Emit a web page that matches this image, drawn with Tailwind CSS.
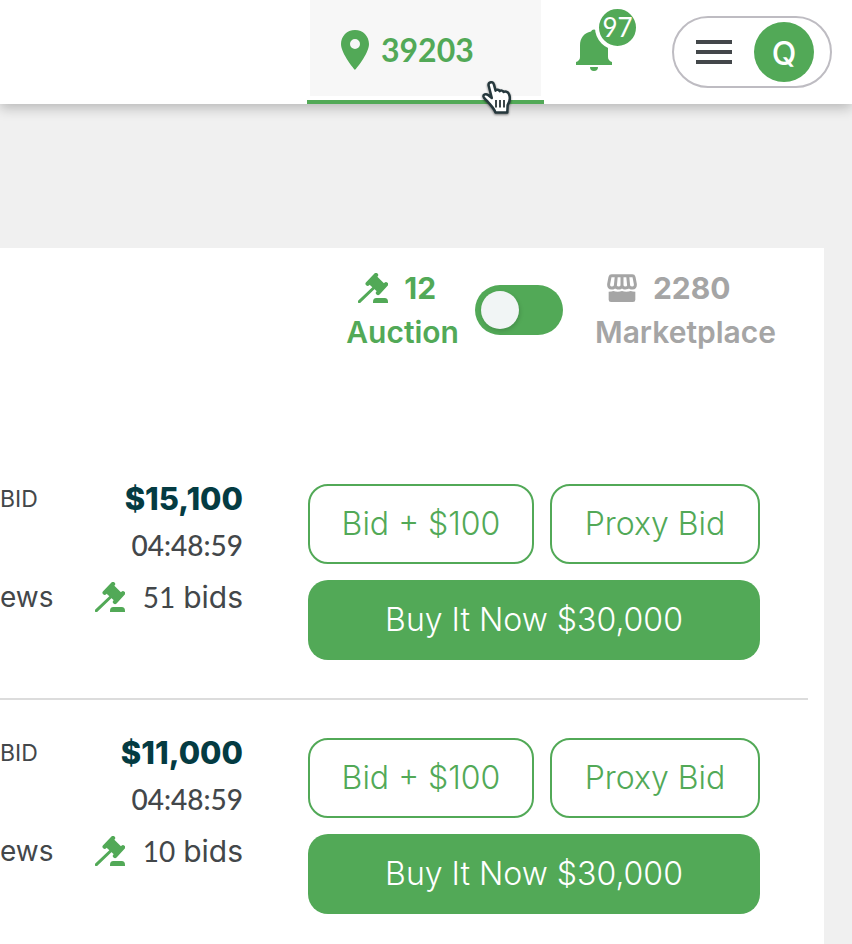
<!DOCTYPE html>
<html lang="en">
<head>
<meta charset="utf-8">
<meta name="viewport" content="width=device-width, initial-scale=1">
<title>Auctions</title>
<script src="https://cdn.jsdelivr.net/npm/@tailwindcss/browser@4"></script>
</head>
<body class="min-h-screen overflow-x-hidden bg-[#f0f0f0] font-[Inter,sans-serif] text-[#43474a]">
<svg class="hidden" aria-hidden="true">
  <symbol id="gavel" viewBox="0 0 90 90">
    <g fill="none" stroke="currentColor" stroke-linecap="round" stroke-linejoin="round">
      <path d="M4 86 50 42" stroke-width="9"/>
      <path d="M29 32 54 6" stroke-width="13"/>
      <path d="M60 60 84 34" stroke-width="13"/>
      <path d="M36 32 56 13 78 35 60 54Z" fill="currentColor" stroke-width="6"/>
    </g>
    <path d="M45 90v-3q0-12 10-12h25q10 0 10 12v3Z" fill="currentColor"/>
  </symbol>
</svg>

<header class="flex h-26 justify-end bg-white pr-5 shadow-[0_4px_12px_rgba(0,0,0,0.24)]">
  <button type="button" class="relative mr-8 flex w-[237px] cursor-pointer flex-col border-b-4 border-[#52a957] px-[3px] text-[#52a957]">
    <span class="flex h-24 w-full items-center gap-3 bg-[#f7f7f7] pt-1 pl-[31px] font-[Lato,sans-serif] text-[32px] leading-10 font-bold">
      <svg class="h-10 w-7" viewBox="0 0 28 40" aria-hidden="true"><path fill="currentColor" fill-rule="evenodd" d="M14 0C6 0 0 6.200 0 14c0 10 14 26 14 26s14-16 14-26C28 6.200 22 0 14 0Zm0 9a5 5 0 1 1 0 10 5 5 0 0 1 0-10Z"/></svg>
      39203
    </span>
    <svg class="absolute top-[81px] left-[174px] h-9 w-8 drop-shadow-[0_1px_1px_rgba(0,0,0,0.5)]" viewBox="0 0 32 36" aria-hidden="true">
      <path d="M7.500 4c0-3.400 4.700-3.800 5.400-.6l1.700 6.200c1-1.300 3.300-1 4.100.5 1.200-1 3.300-.6 3.900.9 1.300-.8 4.300-.5 5.200 1.700 1.600 3.500 1 8-1.200 11.500l-.3 7.300H14.500c-1.500-4.200-4.500-7-7.500-10.500-1.800-2.100-4-3.500-4.500-5.500-.4-2 2.400-3.200 4.600-1.500l3.700 3Z" fill="#fff" stroke="#26383d" stroke-width="2.500" stroke-linejoin="round"/>
      <path d="M15 19v7.500M19 19v7.500M23 19v7.500" stroke="#3c4649" stroke-width="2"/>
    </svg>
  </button>

  <button type="button" aria-label="97 notifications" class="relative mr-9 w-15 cursor-pointer text-[#52a957]">
    <svg class="-mt-1 h-[42px] w-9" viewBox="0 0 36 42" aria-hidden="true">
      <path fill="currentColor" d="M15 2.500a3.200 3.200 0 0 1 6 0c7 1.500 11 7 11 14v11.500q0 3.500 4 5v3H0v-3q4-1.500 4-5V16.500C4 9 8 4 15 2.500ZM14 38h8q0 4-4 4t-4-4Z"/>
    </svg>
    <span class="absolute top-[5px] left-[19px] flex size-[45px] items-center justify-center rounded-full border-4 border-white bg-[#52a957] font-[Lato,sans-serif] text-[26px] text-white">97</span>
  </button>

  <button type="button" aria-label="Account menu" class="mt-4 flex h-18 w-40 cursor-pointer items-center justify-between rounded-full border-2 border-[#bebcc2] pr-4 pl-[22px]">
    <span class="flex w-9 flex-col gap-[6px]">
      <span class="h-1 bg-[#43474a]"></span>
      <span class="h-1 bg-[#43474a]"></span>
      <span class="h-1 bg-[#43474a]"></span>
    </span>
    <span class="flex size-15 items-center justify-center rounded-full bg-[#52a957] pt-1 text-[32px] leading-none font-medium text-white">Q</span>
  </button>
</header>

<main class="mt-36 mr-7 min-h-[696px] bg-white">
  <div class="flex items-center justify-end pt-6 pr-12 pb-[98px] text-[30px] leading-8 font-semibold">
    <label for="mode" class="mr-4 cursor-pointer text-[#52a957]">
      <span class="flex items-center gap-4 pl-3 font-bold"><svg class="size-[30px]" aria-hidden="true"><use href="#gavel"/></svg>12</span>
      <span class="mt-3 block">Auction</span>
    </label>
    <input id="mode" type="checkbox" role="switch" class="mr-8 flex h-[50px] w-22 cursor-pointer appearance-none items-center rounded-full bg-[#52a957] px-[6px] before:size-[38px] before:rounded-full before:bg-[#f1f5f5] before:shadow-[1px_2px_4px_rgba(0,0,0,0.15)] checked:justify-end">
    <label for="mode" class="cursor-pointer text-[#a5a5a5]">
      <span class="flex items-center gap-4 pl-3 font-bold">
        <svg class="h-7 w-[30px]" viewBox="0 0 90 84" aria-hidden="true">
          <path d="M14 5h62q4 0 5 4l4 21q1 12-9 12-8 0-11-6-3 6-10 6t-10-6q-3 6-10 6t-10-6q-3 6-11 6-10 0-9-12L9 9q1-4 5-4ZM28 5l-3 31M45 5v31M62 5l3 31" fill="none" stroke="currentColor" stroke-width="9" stroke-linejoin="round"/>
          <path d="M5 53q9 0 14-2 6 2 13 2t13-2q6 2 13 2t13-2q6 2 14 2v24q0 7-7 7H12q-7 0-7-7Z" fill="currentColor"/>
        </svg>2280</span>
      <span class="mt-3 block">Marketplace</span>
    </label>
  </div>

  <ul class="mr-4">
    <li class="flex justify-between border-b-2 border-[#dcdcdc] pt-[38px] pr-12 pb-[38px]">
      <div class="w-[243px] text-[28px] leading-[30px]">
        <div class="flex items-center justify-between"><span class="text-[23px]">BID</span><strong class="text-[31px] font-extrabold text-[#043b42]">$15,100</strong></div>
        <div class="mt-4 text-right font-[Lato,sans-serif] font-medium">04:48:59</div>
        <div class="mt-[22px] flex items-center justify-between">
          <span>ews</span>
          <span class="flex items-center"><svg class="mr-[18px] size-[30px] text-[#52a957]" aria-hidden="true"><use href="#gavel"/></svg><span class="mr-2 font-[Lato,sans-serif]">51</span><span class="text-[30px]">bids</span></span>
        </div>
      </div>
      <div class="grid w-[452px] grid-cols-[226fr_210fr] gap-4 text-[32px] font-light">
        <button type="button" class="h-20 cursor-pointer rounded-[20px] border-2 border-[#52a957] text-[#52a957]">Bid + $100</button>
        <button type="button" class="h-20 cursor-pointer rounded-[20px] border-2 border-[#52a957] text-[#52a957]">Proxy Bid</button>
        <button type="button" class="col-span-2 h-20 cursor-pointer rounded-[20px] bg-[#52a957] text-white">Buy It Now $30,000</button>
      </div>
    </li>
    <li class="flex justify-between pt-[38px] pr-12 pb-[30px]">
      <div class="w-[243px] text-[28px] leading-[30px]">
        <div class="flex items-center justify-between"><span class="text-[23px]">BID</span><strong class="text-[31px] font-extrabold text-[#043b42]">$11,000</strong></div>
        <div class="mt-4 text-right font-[Lato,sans-serif] font-medium">04:48:59</div>
        <div class="mt-[22px] flex items-center justify-between">
          <span>ews</span>
          <span class="flex items-center"><svg class="mr-[18px] size-[30px] text-[#52a957]" aria-hidden="true"><use href="#gavel"/></svg><span class="mr-2 font-[Lato,sans-serif]">10</span><span class="text-[30px]">bids</span></span>
        </div>
      </div>
      <div class="grid w-[452px] grid-cols-[226fr_210fr] gap-4 text-[32px] font-light">
        <button type="button" class="h-20 cursor-pointer rounded-[20px] border-2 border-[#52a957] text-[#52a957]">Bid + $100</button>
        <button type="button" class="h-20 cursor-pointer rounded-[20px] border-2 border-[#52a957] text-[#52a957]">Proxy Bid</button>
        <button type="button" class="col-span-2 h-20 cursor-pointer rounded-[20px] bg-[#52a957] text-white">Buy It Now $30,000</button>
      </div>
    </li>
  </ul>
</main>
</body>
</html>
